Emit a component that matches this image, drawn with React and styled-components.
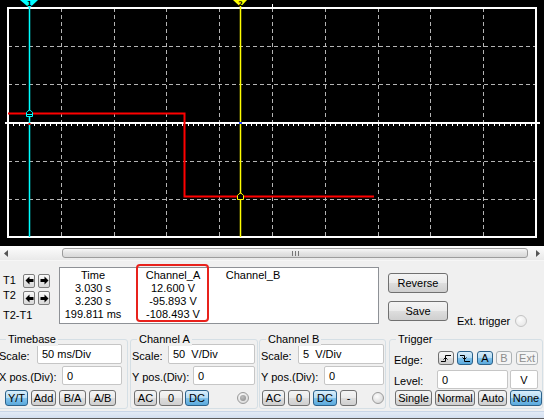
import React from "react";
import styled, { createGlobalStyle, css } from "styled-components";

const GlobalStyle = createGlobalStyle`
  html, body {
    margin: 0;
    padding: 0;
    background: #f0f0f0;
  }
  body {
    font-family: "Liberation Sans", Arial, sans-serif;
    font-size: 11px;
    color: #000;
  }
`;

const Window = styled.div`
  width: 544px;
  height: 419px;
  overflow: hidden;
  background: #f0f0f0;
  display: flex;
  flex-direction: column;
`;

const Screen = styled.svg`
  display: block;
  width: 544px;
  height: 246px;
  background: #000;
  flex: none;
`;

const ScrollBar = styled.div`
  height: 14px;
  flex: none;
  display: flex;
  align-items: center;
  background: linear-gradient(#fdfdfd, #e9e9e9);
  border-bottom: 1px solid #f6f6f6;
`;

const ScrollArrow = styled.div`
  width: 12px;
  display: flex;
  justify-content: center;
  margin-left: ${(p) => p.$ml || 0}px;
`;

const Thumb = styled.div`
  margin-left: 50px;
  width: 466px;
  height: 10px;
  box-sizing: border-box;
  border: 1px solid #9c9c9c;
  border-radius: 3px;
  background: linear-gradient(#f7f7f7, #e4e4e4 50%, #d8d8d8);
  display: flex;
  align-items: center;
  justify-content: center;
  gap: 2px;
`;

const Grip = styled.span`
  width: 1px;
  height: 5px;
  background: #777;
`;

const CursorPanel = styled.div`
  height: 75px;
  flex: none;
  display: flex;
  align-items: flex-start;
`;

const TCol = styled.div`
  width: 56px;
  padding: 12px 0 0 3px;
  display: flex;
  flex-direction: column;
`;

const TRow = styled.div`
  display: flex;
  align-items: center;
  height: ${(p) => p.$h || 14}px;
  margin-top: ${(p) => p.$mt || 0}px;
  gap: 3px;
`;

const TLabel = styled.span`
  width: 17px;
  flex: none;
  line-height: 13px;
  white-space: nowrap;
  position: relative;
  top: ${(p) => p.$dy || 0}px;
`;

const ArrowBtn = styled.button`
  width: 12px;
  height: 14px;
  padding: 0;
  margin: 0;
  box-sizing: border-box;
  border: 1px solid #7d7d7d;
  border-radius: 2px;
  background: linear-gradient(#fbfbfb, #e6e6e6 50%, #d9d9d9);
  display: flex;
  align-items: center;
  justify-content: center;
`;

const DataBox = styled.div`
  position: relative;
  margin-top: 6px;
  width: 320px;
  height: 57px;
  box-sizing: border-box;
  border: 1px solid #8e9196;
  background: #fff;
  display: grid;
  grid-template-columns: 66px 94px 66px;
  grid-auto-rows: 13px;
  line-height: 13px;
  padding-top: 1px;
`;

const Cell = styled.div`
  text-align: center;
  white-space: nowrap;
`;

const Highlight = styled.div`
  position: absolute;
  left: 76px;
  top: -4px;
  width: 73px;
  height: 58px;
  box-sizing: border-box;
  border: 2px solid #e8221c;
  border-radius: 4px;
`;

const ButtonCol = styled.div`
  margin: 12px 0 0 9px;
  display: flex;
  flex-direction: column;
  gap: 8px;
`;

const Btn = styled.button`
  font: inherit;
  font-size: 11px;
  line-height: 12px;
  padding: 0;
  margin: 0;
  width: ${(p) => p.$w}px;
  height: ${(p) => p.$h || 16}px;
  margin-left: ${(p) => p.$ml || 0}px;
  box-sizing: border-box;
  border: 1px solid #707070;
  border-radius: 3px;
  color: #000;
  background: linear-gradient(#f4f4f4, #ebebeb 48%, #dddddd 52%, #cfcfcf);
  display: flex;
  align-items: center;
  justify-content: center;
  ${(p) =>
    p.$on &&
    css`
      border-color: #2c628b;
      background: linear-gradient(#d9eefb, #b4dcf5 48%, #82c3ec 52%, #5aa9dc);
    `}
  &:disabled {
    border-color: #adb2b5;
    background: #f4f4f4;
    color: #8d8d8d;
  }
`;

const ExtTrigger = styled.div`
  margin: 54px 0 0 9px;
  display: flex;
  align-items: center;
  gap: 5px;
  white-space: nowrap;
`;

const Radio = styled.span`
  display: inline-flex;
  align-items: center;
  justify-content: center;
  width: 12px;
  height: 12px;
  box-sizing: border-box;
  border-radius: 50%;
  border: 1px solid ${(p) => (p.$light ? "#c4c4c4" : "#9a9a9a")};
  background: radial-gradient(circle at 40% 35%, #fdfdfd, ${(p) => (p.$light ? "#e2e2e2" : "#cfcfcf")});
  margin-left: ${(p) => p.$ml || 0}px;
  &::after {
    content: "";
    display: ${(p) => (p.$dot ? "block" : "none")};
    width: 6px;
    height: 6px;
    border-radius: 50%;
    background: radial-gradient(circle at 40% 35%, #bdbdbd, #8a8a8a);
  }
`;

const GroupRow = styled.div`
  display: flex;
  margin: 3px 0 0 -3px;
  flex: none;
`;

const Group = styled.div`
  position: relative;
  width: ${(p) => p.$w}px;
  height: 70px;
  margin-left: ${(p) => p.$ml || 0}px;
  box-sizing: border-box;
  border: 1px solid #d5dfe5;
  border-radius: 3px;
  padding: 4px 0 0 ${(p) => p.$pl || 1}px;
  display: flex;
  flex-direction: column;
`;

const GroupTitle = styled.span`
  position: absolute;
  top: -7px;
  left: ${(p) => p.$left || 6}px;
  padding: 0 2px;
  line-height: 13px;
  background: #f0f0f0;
  white-space: nowrap;
`;

const FieldRow = styled.div`
  display: flex;
  align-items: center;
  height: ${(p) => p.$h || 20}px;
  margin-top: ${(p) => p.$mt || 0}px;
  gap: ${(p) => p.$gap || 0}px;
`;

const FieldLabel = styled.span`
  width: ${(p) => p.$w}px;
  flex: none;
  padding-top: 3px;
  padding-left: ${(p) => p.$pl || 0}px;
  box-sizing: border-box;
  white-space: nowrap;
`;

const TextBox = styled.div`
  width: ${(p) => p.$w}px;
  height: ${(p) => p.$h || 20}px;
  flex: none;
  box-sizing: border-box;
  border: 1px solid #c6c6c6;
  border-radius: 2px;
  background: #fff;
  padding: 0 0 0 ${(p) => (p.$center ? 0 : 4)}px;
  display: flex;
  align-items: center;
  justify-content: ${(p) => (p.$center ? "center" : "flex-start")};
  white-space: pre;
  margin-left: ${(p) => p.$ml || 0}px;
`;

const ButtonRow = styled.div`
  display: flex;
  align-items: center;
  gap: ${(p) => p.$gap || 3}px;
  margin-top: ${(p) => p.$mt || 5}px;
  padding-left: ${(p) => p.$pl || 0}px;
`;

const Footer = styled.div`
  margin-top: 2px;
  height: 6px;
  flex: none;
  background: linear-gradient(#e3ebf6, #d3dff0);
  border-top: 1px solid #c9d6e8;
  border-bottom: 2px solid #5c5c5c;
`;

const Arrow = ({ dir }) => (
  <svg width="9" height="9" viewBox="0 0 9 9">
    <path
      d={
        dir === "left"
          ? "M0.5 4.5 L4.5 0.5 V3 H8.5 V6 H4.5 V8.5 Z"
          : "M8.5 4.5 L4.5 0.5 V3 H0.5 V6 H4.5 V8.5 Z"
      }
      fill="#000"
    />
  </svg>
);

const EdgeIcon = ({ falling }) => (
  <svg width="12" height="10" viewBox="0 0 12 10">
    <path
      d={falling ? "M1 2.5 H5.5 V8.5 H11" : "M1 8.5 H5.5 V2.5 H11"}
      fill="none"
      stroke="#000"
      strokeWidth="1"
    />
    <path d={falling ? "M3.5 4.5 L5.5 6.5 L7.5 4.5" : "M3.5 6.5 L5.5 4.5 L7.5 6.5"} fill="none" stroke="#000" />
  </svg>
);

const Plot = () => {
  const X0 = 8;
  const Y0 = 8;
  const W = 528;
  const H = 229;
  const dx = W / 10;
  const dy = H / 6;
  const vx = Array.from({ length: 9 }, (_, i) => Math.round(X0 + (i + 1) * dx) + 0.5);
  const hy = Array.from({ length: 5 }, (_, i) => Math.round(Y0 + (i + 1) * dy) + 0.5);
  const ticks = Array.from({ length: 101 }, (_, i) => Math.round(X0 + (i * dx) / 10) + 0.5);

  return (
    <Screen viewBox="0 0 544 246">
      {vx.map((x) => (
        <line key={"v" + x} x1={x} y1={Y0} x2={x} y2={Y0 + H} stroke="#b4b4b4" strokeDasharray="4 3" />
      ))}
      {hy.map((y) => (
        <line key={"h" + y} x1={X0} y1={y} x2={X0 + W} y2={y} stroke="#b4b4b4" strokeDasharray="4 3" />
      ))}
      <rect x={X0} y={Y0} width={W} height={H} fill="none" stroke="#fff" strokeWidth="2" />
      <line x1="5" y1="123" x2="540" y2="123" stroke="#fff" strokeWidth="2" />
      {ticks.map((x) => (
        <line key={"t" + x} x1={x} y1="123" x2={x} y2="126" stroke="#fff" strokeWidth="1" />
      ))}
      <line x1="272.5" y1="4" x2="272.5" y2="8" stroke="#fff" />

      <polyline
        points="8,113.5 184.5,113.5 184.5,196.5 374,196.5"
        fill="none"
        stroke="#ff0000"
        strokeWidth="2"
      />

      <line x1="29.5" y1="6" x2="29.5" y2="237" stroke="#00ffff" strokeWidth="1.5" />
      <line x1="240.5" y1="6" x2="240.5" y2="237" stroke="#ffff00" strokeWidth="1.5" />

      <polygon points="20,0 38,0 29.5,8" fill="#00ffff" />
      <text x="29.5" y="6" textAnchor="middle" fontSize="7" fontWeight="bold" fontFamily="DejaVu Sans, sans-serif" fill="#000">
        1
      </text>
      <polygon points="233,0 247,0 240.5,7" fill="#ffff00" />
      <text x="240.5" y="5.5" textAnchor="middle" fontSize="6.5" fontWeight="bold" fontFamily="DejaVu Sans, sans-serif" fill="#000">
        2
      </text>

      <path d="M26.5 116.5 V112.5 Q29.5 108 32.5 112.5 V116.5 Z M26.5 114.5 H32.5" fill="#000" stroke="#00ffff" strokeWidth="1" />
      <path d="M237.5 199.5 V195.5 Q240.5 191 243.5 195.5 V199.5 Z" fill="#000" stroke="#ffff00" strokeWidth="1" />
      <rect x="239" y="122" width="3" height="2" fill="#2040ff" />
      <rect x="28.5" y="123" width="2" height="2" fill="#ff0000" />
    </Screen>
  );
};

const App = () => {
  return (
    <>
      <GlobalStyle />
      <Window>
        <Plot />

        <ScrollBar>
          <ScrollArrow>
            <svg width="4" height="7" viewBox="0 0 4 7">
              <path d="M4 0 L0 3.5 L4 7 Z" fill="#555" />
            </svg>
          </ScrollArrow>
          <Thumb>
            <Grip />
            <Grip />
            <Grip />
          </Thumb>
          <ScrollArrow $ml={4}>
            <svg width="4" height="7" viewBox="0 0 4 7">
              <path d="M0 0 L4 3.5 L0 7 Z" fill="#555" />
            </svg>
          </ScrollArrow>
        </ScrollBar>

        <CursorPanel>
          <TCol>
            <TRow $h={15}>
              <TLabel>T1</TLabel>
              <ArrowBtn>
                <Arrow dir="left" />
              </ArrowBtn>
              <ArrowBtn>
                <Arrow dir="right" />
              </ArrowBtn>
            </TRow>
            <TRow $mt={3}>
              <TLabel $dy={-3}>T2</TLabel>
              <ArrowBtn>
                <Arrow dir="left" />
              </ArrowBtn>
              <ArrowBtn>
                <Arrow dir="right" />
              </ArrowBtn>
            </TRow>
            <TRow $mt={3}>
              <TLabel>T2-T1</TLabel>
            </TRow>
          </TCol>

          <DataBox>
            <Cell>Time</Cell>
            <Cell>Channel_A</Cell>
            <Cell>Channel_B</Cell>
            <Cell>3.030 s</Cell>
            <Cell>12.600 V</Cell>
            <Cell />
            <Cell>3.230 s</Cell>
            <Cell>-95.893 V</Cell>
            <Cell />
            <Cell>199.811 ms</Cell>
            <Cell>-108.493 V</Cell>
            <Cell />
            <Highlight />
          </DataBox>

          <ButtonCol>
            <Btn $w={60} $h={20}>Reverse</Btn>
            <Btn $w={60} $h={20}>Save</Btn>
          </ButtonCol>

          <ExtTrigger>
            Ext. trigger
            <Radio $light />
          </ExtTrigger>
        </CursorPanel>

        <GroupRow>
          <Group $w={131}>
            <GroupTitle $left={8}>Timebase</GroupTitle>
            <FieldRow>
              <FieldLabel $w={38}>Scale:</FieldLabel>
              <TextBox $w={85}>50 ms/Div</TextBox>
            </FieldRow>
            <FieldRow $mt={2} $h={19}>
              <FieldLabel $w={63}>X pos.(Div):</FieldLabel>
              <TextBox $w={60} $h={19}>0</TextBox>
            </FieldRow>
            <ButtonRow $pl={6}>
              <Btn $w={23} $on>Y/T</Btn>
              <Btn $w={25}>Add</Btn>
              <Btn $w={27}>B/A</Btn>
              <Btn $w={27}>A/B</Btn>
            </ButtonRow>
          </Group>

          <Group $w={128} $ml={2}>
            <GroupTitle>Channel A</GroupTitle>
            <FieldRow>
              <FieldLabel $w={36}>Scale:</FieldLabel>
              <TextBox $w={87}>50  V/Div</TextBox>
            </FieldRow>
            <FieldRow $mt={2} $h={19}>
              <FieldLabel $w={61}>Y pos.(Div):</FieldLabel>
              <TextBox $w={62} $h={19}>0</TextBox>
            </FieldRow>
            <ButtonRow $pl={2} $gap={2}>
              <Btn $w={23}>AC</Btn>
              <Btn $w={24}>0</Btn>
              <Btn $w={24} $on>DC</Btn>
              <Radio $dot $ml={26} />
            </ButtonRow>
          </Group>

          <Group $w={127} $ml={1}>
            <GroupTitle>Channel B</GroupTitle>
            <FieldRow>
              <FieldLabel $w={37}>Scale:</FieldLabel>
              <TextBox $w={86}>5  V/Div</TextBox>
            </FieldRow>
            <FieldRow $mt={2} $h={19}>
              <FieldLabel $w={63}>Y pos.(Div):</FieldLabel>
              <TextBox $w={60} $h={19}>0</TextBox>
            </FieldRow>
            <ButtonRow $pl={1}>
              <Btn $w={23}>AC</Btn>
              <Btn $w={22}>0</Btn>
              <Btn $w={24} $on>DC</Btn>
              <Btn $w={17}>-</Btn>
              <Radio $ml={12} />
            </ButtonRow>
          </Group>

          <Group $w={154} $ml={3}>
            <GroupTitle>Trigger</GroupTitle>
            <FieldRow $mt={4} $h={20}>
              <FieldLabel $w={47} $pl={3}>Edge:</FieldLabel>
              <Btn $w={16} $h={14}>
                <EdgeIcon />
              </Btn>
              <Btn $w={16} $h={14} $ml={3} $on>
                <EdgeIcon falling />
              </Btn>
              <Btn $w={16} $h={14} $ml={4} $on>A</Btn>
              <Btn $w={16} $h={14} $ml={3} disabled>B</Btn>
              <Btn $w={22} $h={14} $ml={4} disabled>Ext</Btn>
            </FieldRow>
            <FieldRow $mt={2} $h={19}>
              <FieldLabel $w={46} $pl={3}>Level:</FieldLabel>
              <TextBox $w={71} $h={19}>0</TextBox>
              <TextBox $w={28} $h={19} $ml={2} $center>V</TextBox>
            </FieldRow>
            <ButtonRow $mt={1} $pl={4}>
              <Btn $w={37}>Single</Btn>
              <Btn $w={40}>Normal</Btn>
              <Btn $w={29}>Auto</Btn>
              <Btn $w={32} $on>None</Btn>
            </ButtonRow>
          </Group>
        </GroupRow>

        <Footer />
      </Window>
    </>
  );
};

export default App;
